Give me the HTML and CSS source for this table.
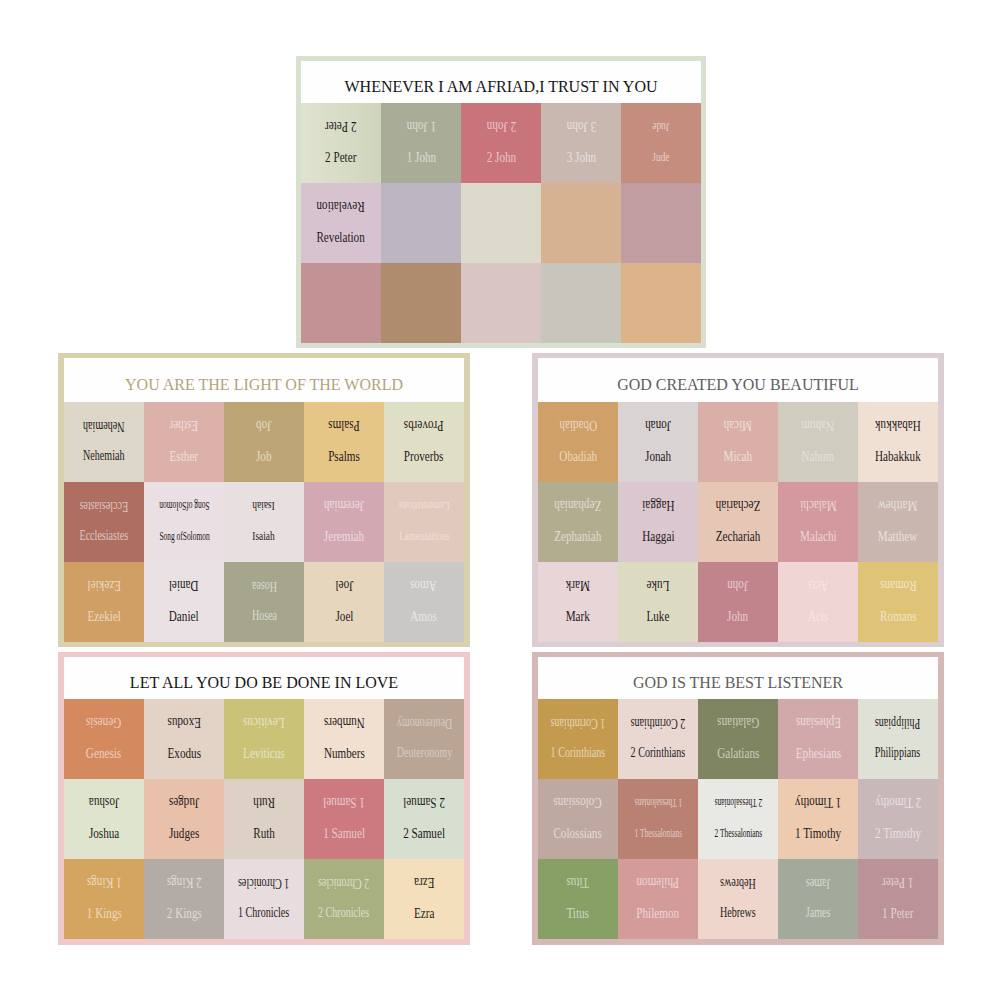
FILE: index.html
```html
<!DOCTYPE html>
<html lang="en">
<head>
<meta charset="utf-8">
<title>Bible Book Color Cards</title>
<link rel="stylesheet" href="styles.css">
</head>
<body>
<main class="page">
  <div class="row">
    <section class="sheet sheet-top fr-sage">
      <header class="title t-black">WHENEVER I AM AFRIAD,I TRUST IN YOU</header>
      <div class="grid">
        <div class="cell c-peter2 dk"><span class="flip">2 Peter</span><span class="nm">2 Peter</span></div>
        <div class="cell c-john1 lt"><span class="flip">1 John</span><span class="nm">1 John</span></div>
        <div class="cell c-john2 lt"><span class="flip">2 John</span><span class="nm">2 John</span></div>
        <div class="cell c-john3 lt"><span class="flip">3 John</span><span class="nm">3 John</span></div>
        <div class="cell c-jude lt sm"><span class="flip">Jude</span><span class="nm">Jude</span></div>
        <div class="cell c-rev dk"><span class="flip">Revelation</span><span class="nm">Revelation</span></div>
        <div class="cell c-e1"></div>
        <div class="cell c-e2"></div>
        <div class="cell c-e3"></div>
        <div class="cell c-e4"></div>
        <div class="cell c-e5"></div>
        <div class="cell c-e6"></div>
        <div class="cell c-e7"></div>
        <div class="cell c-e8"></div>
        <div class="cell c-e9"></div>
      </div>
    </section>
  </div>

  <div class="row pair">
    <section class="sheet sheet-mid fr-khaki">
      <header class="title t-gold">YOU ARE THE LIGHT OF THE WORLD</header>
      <div class="grid">
        <div class="cell c-neh dk md"><span class="flip">Nehemiah</span><span class="nm">Nehemiah</span></div>
        <div class="cell c-est lt"><span class="flip">Esther</span><span class="nm">Esther</span></div>
        <div class="cell c-job lt"><span class="flip">Job</span><span class="nm">Job</span></div>
        <div class="cell c-psa dk"><span class="flip">Psalms</span><span class="nm">Psalms</span></div>
        <div class="cell c-pro dk"><span class="flip">Proverbs</span><span class="nm">Proverbs</span></div>
        <div class="cell c-ecc lt md"><span class="flip">Ecclesiastes</span><span class="nm">Ecclesiastes</span></div>
        <div class="cell c-song dk xs"><span class="flip">Song ofSolomon</span><span class="nm">Song ofSolomon</span></div>
        <div class="cell c-isa dk sm"><span class="flip">Isaiah</span><span class="nm">Isaiah</span></div>
        <div class="cell c-jer lt"><span class="flip">Jeremiah</span><span class="nm">Jeremiah</span></div>
        <div class="cell c-lam ft sm"><span class="flip">Lamentations</span><span class="nm">Lamentations</span></div>
        <div class="cell c-eze lt"><span class="flip">Ezekiel</span><span class="nm">Ezekiel</span></div>
        <div class="cell c-dan dk"><span class="flip">Daniel</span><span class="nm">Daniel</span></div>
        <div class="cell c-hos lt md"><span class="flip">Hosea</span><span class="nm">Hosea</span></div>
        <div class="cell c-joel dk"><span class="flip">Joel</span><span class="nm">Joel</span></div>
        <div class="cell c-amos lt"><span class="flip">Amos</span><span class="nm">Amos</span></div>
      </div>
    </section>

    <section class="sheet sheet-mid fr-mauve">
      <header class="title t-grey">GOD CREATED YOU BEAUTIFUL</header>
      <div class="grid">
        <div class="cell c-oba lt"><span class="flip">Obadiah</span><span class="nm">Obadiah</span></div>
        <div class="cell c-jon dk"><span class="flip">Jonah</span><span class="nm">Jonah</span></div>
        <div class="cell c-mic lt"><span class="flip">Micah</span><span class="nm">Micah</span></div>
        <div class="cell c-nah ft"><span class="flip">Nahum</span><span class="nm">Nahum</span></div>
        <div class="cell c-hab dk"><span class="flip">Habakkuk</span><span class="nm">Habakkuk</span></div>
        <div class="cell c-zep lt"><span class="flip">Zephaniah</span><span class="nm">Zephaniah</span></div>
        <div class="cell c-hag dk"><span class="flip">Haggai</span><span class="nm">Haggai</span></div>
        <div class="cell c-zec dk"><span class="flip">Zechariah</span><span class="nm">Zechariah</span></div>
        <div class="cell c-mal lt"><span class="flip">Malachi</span><span class="nm">Malachi</span></div>
        <div class="cell c-mat lt"><span class="flip">Matthew</span><span class="nm">Matthew</span></div>
        <div class="cell c-mark dk"><span class="flip">Mark</span><span class="nm">Mark</span></div>
        <div class="cell c-luke dk"><span class="flip">Luke</span><span class="nm">Luke</span></div>
        <div class="cell c-john lt"><span class="flip">John</span><span class="nm">John</span></div>
        <div class="cell c-acts ft"><span class="flip">Acts</span><span class="nm">Acts</span></div>
        <div class="cell c-rom lt"><span class="flip">Romans</span><span class="nm">Romans</span></div>
      </div>
    </section>
  </div>

  <div class="row pair">
    <section class="sheet sheet-bot fr-pink">
      <header class="title t-black">LET ALL YOU DO BE DONE IN LOVE</header>
      <div class="grid">
        <div class="cell c-gen lt"><span class="flip">Genesis</span><span class="nm">Genesis</span></div>
        <div class="cell c-exo dk"><span class="flip">Exodus</span><span class="nm">Exodus</span></div>
        <div class="cell c-lev lt"><span class="flip">Leviticus</span><span class="nm">Leviticus</span></div>
        <div class="cell c-num dk"><span class="flip">Numbers</span><span class="nm">Numbers</span></div>
        <div class="cell c-deu ft md"><span class="flip">Deuteronomy</span><span class="nm">Deuteronomy</span></div>
        <div class="cell c-jos dk"><span class="flip">Joshua</span><span class="nm">Joshua</span></div>
        <div class="cell c-jdg dk"><span class="flip">Judges</span><span class="nm">Judges</span></div>
        <div class="cell c-ruth dk"><span class="flip">Ruth</span><span class="nm">Ruth</span></div>
        <div class="cell c-sam1 lt"><span class="flip">1 Samuel</span><span class="nm">1 Samuel</span></div>
        <div class="cell c-sam2 dk"><span class="flip">2 Samuel</span><span class="nm">2 Samuel</span></div>
        <div class="cell c-kgs1 lt"><span class="flip">1 Kings</span><span class="nm">1 Kings</span></div>
        <div class="cell c-kgs2 lt"><span class="flip">2 Kings</span><span class="nm">2 Kings</span></div>
        <div class="cell c-chr1 dk md"><span class="flip">1 Chronicles</span><span class="nm">1 Chronicles</span></div>
        <div class="cell c-chr2 lt md"><span class="flip">2 Chronicles</span><span class="nm">2 Chronicles</span></div>
        <div class="cell c-ezra dk"><span class="flip">Ezra</span><span class="nm">Ezra</span></div>
      </div>
    </section>

    <section class="sheet sheet-bot fr-rose">
      <header class="title t-grey">GOD IS THE BEST LISTENER</header>
      <div class="grid">
        <div class="cell c-cor1 lt md"><span class="flip">1 Corinthians</span><span class="nm">1 Corinthians</span></div>
        <div class="cell c-cor2 dk md"><span class="flip">2 Corinthians</span><span class="nm">2 Corinthians</span></div>
        <div class="cell c-gal lt"><span class="flip">Galatians</span><span class="nm">Galatians</span></div>
        <div class="cell c-eph lt"><span class="flip">Ephesians</span><span class="nm">Ephesians</span></div>
        <div class="cell c-phi dk md"><span class="flip">Philippians</span><span class="nm">Philippians</span></div>
        <div class="cell c-col lt"><span class="flip">Colossians</span><span class="nm">Colossians</span></div>
        <div class="cell c-the1 lt xs"><span class="flip">1 Thessalonians</span><span class="nm">1 Thessalonians</span></div>
        <div class="cell c-the2 dk xs"><span class="flip">2 Thessalonians</span><span class="nm">2 Thessalonians</span></div>
        <div class="cell c-tim1 dk"><span class="flip">1 Timothy</span><span class="nm">1 Timothy</span></div>
        <div class="cell c-tim2 lt"><span class="flip">2 Timothy</span><span class="nm">2 Timothy</span></div>
        <div class="cell c-tit lt"><span class="flip">Titus</span><span class="nm">Titus</span></div>
        <div class="cell c-phm lt"><span class="flip">Philemon</span><span class="nm">Philemon</span></div>
        <div class="cell c-heb dk md"><span class="flip">Hebrews</span><span class="nm">Hebrews</span></div>
        <div class="cell c-jas lt md"><span class="flip">James</span><span class="nm">James</span></div>
        <div class="cell c-pet1 lt"><span class="flip">1 Peter</span><span class="nm">1 Peter</span></div>
      </div>
    </section>
  </div>
</main>
</body>
</html>
```

FILE: styles.css
```css
html, body {
  margin: 0;
  padding: 0;
  background: #ffffff;
}

body {
  font-family: "Liberation Serif", "Times New Roman", serif;
}

.page {
  display: flex;
  flex-direction: column;
  gap: 5px;
  padding-top: 56px;
}

.row {
  display: flex;
  justify-content: center;
}

.row.pair {
  gap: 62px;
}

.sheet {
  display: flex;
  flex-direction: column;
  box-sizing: border-box;
}

.sheet-top {
  border: 5px solid;
}

.sheet-mid {
  border-style: solid;
  border-width: 5px 6px;
}

.sheet-bot {
  border-style: solid;
  border-width: 5px 6px 6px;
}

.fr-sage  { border-color: #d8e0cf; }
.fr-khaki { border-color: #d9d0ae; }
.fr-mauve { border-color: #dccdd3; }
.fr-pink  { border-color: #efc9c9; }
.fr-rose  { border-color: #d5b9b6; }

.title {
  height: 42px;
  box-sizing: border-box;
  background: #fefefe;
  display: flex;
  align-items: flex-end;
  justify-content: center;
  padding-bottom: 6px;
  font-size: 16px;
  line-height: 20px;
  white-space: nowrap;
}

.sheet-mid .title {
  height: 44px;
  padding-bottom: 7px;
}

.t-black { color: #161616; }
.t-gold  { color: #b3a47c; }
.t-grey  { color: #5e5e5e; }

.grid {
  display: grid;
  grid-template-columns: repeat(5, 80px);
  grid-auto-rows: 80px;
}

.cell {
  display: flex;
  flex-direction: column;
  align-items: center;
  padding-top: 15px;
  gap: 12px;
  box-sizing: border-box;
  font-size: 15.5px;
  line-height: 18px;
  white-space: nowrap;
}

.cell span {
  display: inline-block;
}

.cell .flip {
  transform: rotate(180deg) scaleX(0.72);
}

.cell .nm {
  transform: scaleX(0.72);
}

.cell.md {
  font-size: 14px;
}

.cell.sm {
  font-size: 13px;
}

.cell.xs {
  font-size: 12px;
}

.cell.xs .flip {
  transform: rotate(180deg) scaleX(0.62);
}

.cell.xs .nm {
  transform: scaleX(0.62);
}

.dk { color: #1f1a1a; }
.lt { color: rgba(255, 255, 255, 0.6); }
.ft { color: rgba(255, 255, 255, 0.44); }

/* sheet 1 */
.c-peter2 { background: linear-gradient(90deg, #dfe3d0, #cfd5bc); }
.c-john1 { background: #a9ad98; }
.c-john2 { background: #c9737a; }
.c-john3 { background: #c9b8b0; }
.c-jude { background: #c48d7e; }
.c-rev { background: #d7c3d0; }
.c-e1 { background: #bdb6c2; }
.c-e2 { background: #dcdacb; }
.c-e3 { background: #d6b293; }
.c-e4 { background: #bf9da1; }
.c-e5 { background: #c39295; }
.c-e6 { background: #b08c6e; }
.c-e7 { background: #d8c5c4; }
.c-e8 { background: #c8c5bd; }
.c-e9 { background: #ddb48a; }

/* sheet 2 */
.c-neh { background: #dcd7c8; }
.c-est { background: #dbb1a9; }
.c-job { background: #bea575; }
.c-psa { background: #e6c687; }
.c-pro { background: #dfdfc6; }
.c-ecc { background: #ae6f62; }
.c-song { background: #eadfe3; }
.c-isa { background: #e8dfe0; }
.c-jer { background: #d2a9b3; }
.c-lam { background: #e2c9bd; }
.c-eze { background: #cf9f65; }
.c-dan { background: #e9e1e3; }
.c-hos { background: #a5a68b; }
.c-joel { background: #e5d6bd; }
.c-amos { background: #c9c8c6; }

/* sheet 3 */
.c-oba { background: #cfa067; }
.c-jon { background: #d9d3d3; }
.c-mic { background: #d9afa8; }
.c-nah { background: #d0cdc0; }
.c-hab { background: #f0e0d3; }
.c-zep { background: #b3ad8f; }
.c-hag { background: #dbc7cf; }
.c-zec { background: #e6c7b5; }
.c-mal { background: #d3999d; }
.c-mat { background: #c9b6ae; }
.c-mark { background: #e8d5d7; }
.c-luke { background: #dcdbc2; }
.c-john { background: #c1838c; }
.c-acts { background: #efd5d3; }
.c-rom { background: #dfc477; }

/* sheet 4 */
.c-gen { background: #d4895f; }
.c-exo { background: #e3d3c6; }
.c-lev { background: #c9c277; }
.c-num { background: #f1e0d0; }
.c-deu { background: #baa594; }
.c-jos { background: #dfe4cf; }
.c-jdg { background: #e9c0a9; }
.c-ruth { background: #ddd0c4; }
.c-sam1 { background: #cc7a80; }
.c-sam2 { background: #d6dfd0; }
.c-kgs1 { background: #d3a55e; }
.c-kgs2 { background: #b2aba6; }
.c-chr1 { background: #e8dcde; }
.c-chr2 { background: #a9b07f; }
.c-ezra { background: #f3dfbc; }

/* sheet 5 */
.c-cor1 { background: #c49a4e; }
.c-cor2 { background: #e9d7d2; }
.c-gal { background: #7f8560; }
.c-eph { background: #d2a9ab; }
.c-phi { background: #dfe0d6; }
.c-col { background: #bfa89f; }
.c-the1 { background: #b88172; }
.c-the2 { background: #e8e8e4; }
.c-tim1 { background: #eccbb0; }
.c-tim2 { background: #c9b8ba; }
.c-tit { background: #86a066; }
.c-phm { background: #d49b9b; }
.c-heb { background: #eed6cc; }
.c-jas { background: #a1aa9b; }
.c-pet1 { background: #bb9298; }
```
